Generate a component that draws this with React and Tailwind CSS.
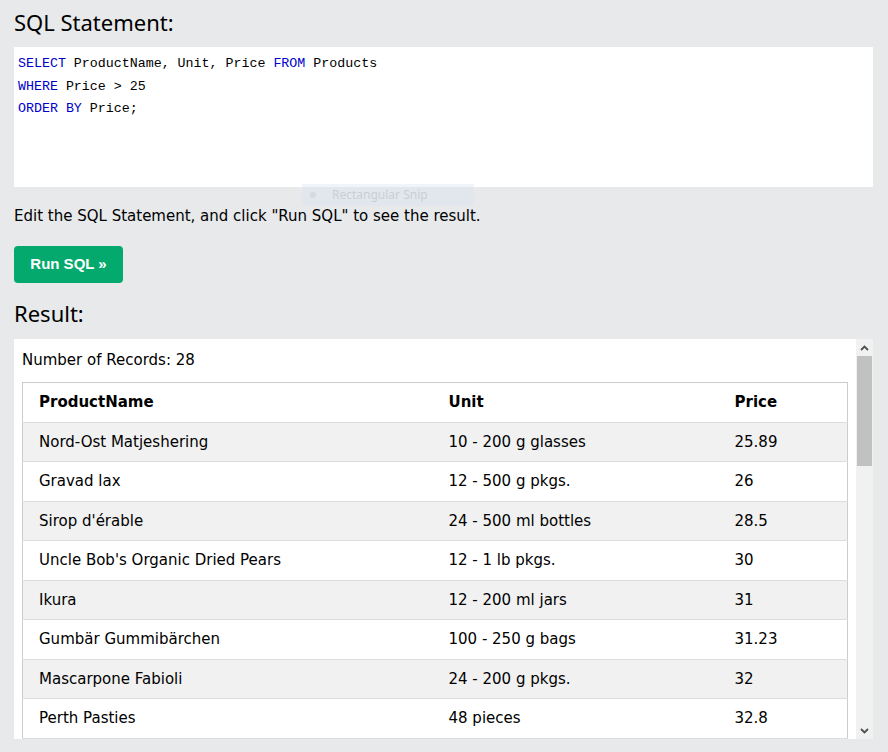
import React from "react";

const rows = [
  ["Nord-Ost Matjeshering", "10 - 200 g glasses", "25.89"],
  ["Gravad lax", "12 - 500 g pkgs.", "26"],
  ["Sirop d'érable", "24 - 500 ml bottles", "28.5"],
  ["Uncle Bob's Organic Dried Pears", "12 - 1 lb pkgs.", "30"],
  ["Ikura", "12 - 200 ml jars", "31"],
  ["Gumbär Gummibärchen", "100 - 250 g bags", "31.23"],
  ["Mascarpone Fabioli", "24 - 200 g pkgs.", "32"],
  ["Perth Pasties", "48 pieces", "32.8"],
];

const heading = { fontFamily: '"Noto Sans", "Open Sans", sans-serif' };
const verdana = { fontFamily: '"DejaVu Sans", Verdana, sans-serif' };

export default function App() {
  return (
    <div className="relative h-[752px] overflow-hidden bg-[#e7e9eb] pl-[14px] pr-[15px] pt-[5px] text-black">
      <h2 className="text-[22px] leading-[34px] font-normal" style={heading}>
        SQL Statement:
      </h2>
      <div
        className="mt-[8px] h-[140px] bg-white pl-[4px] pt-[6px] text-[13.3px] leading-[22.5px] text-black"
        style={{ fontFamily: '"Liberation Mono", monospace' }}
      >
        <div>
          <span className="text-[#0000cd]">SELECT</span> ProductName, Unit, Price{" "}
          <span className="text-[#0000cd]">FROM</span> Products
        </div>
        <div>
          <span className="text-[#0000cd]">WHERE</span> Price &gt; 25
        </div>
        <div>
          <span className="text-[#0000cd]">ORDER BY</span> Price;
        </div>
      </div>
      <p className="mt-[19px] text-[15px] leading-[20px]" style={verdana}>
        Edit the SQL Statement, and click "Run SQL" to see the result.
      </p>
      <button
        className="mt-[20px] flex h-[37px] w-[109px] items-center justify-center rounded-[4px] bg-[#04aa6d] text-[15px] font-bold text-white"
        style={{ fontFamily: '"Liberation Sans", Arial, sans-serif' }}
      >
        Run SQL »
      </button>
      <h2 className="mt-[13px] text-[22px] leading-[34px] font-normal" style={heading}>
        Result:
      </h2>
      <div className="mt-[9px] flex h-[400px] overflow-hidden bg-white">
        <div className="flex-1 overflow-hidden px-[8px] pt-[11px]" style={verdana}>
          <div className="text-[15px] leading-[20px]">Number of Records: 28</div>
          <table className="mt-[12px] w-full table-fixed border-collapse border border-[#cccccc] text-[15px] leading-[22.5px]">
            <colgroup>
              <col className="w-[418px]" />
              <col className="w-[286px]" />
              <col />
            </colgroup>
            <thead>
              <tr className="border-b border-[#dddddd] bg-white">
                <th className="py-[8px] pl-[16px] pr-[8px] text-left font-bold">ProductName</th>
                <th className="px-[8px] py-[8px] text-left font-bold">Unit</th>
                <th className="px-[8px] py-[8px] text-left font-bold">Price</th>
              </tr>
            </thead>
            <tbody>
              {rows.map((r, i) => (
                <tr
                  key={i}
                  className={`border-b border-[#dddddd] ${i % 2 === 0 ? "bg-[#f1f1f1]" : "bg-white"}`}
                >
                  <td className="py-[8px] pl-[16px] pr-[8px]">{r[0]}</td>
                  <td className="px-[8px] py-[8px]">{r[1]}</td>
                  <td className="px-[8px] py-[8px]">{r[2]}</td>
                </tr>
              ))}
            </tbody>
          </table>
        </div>
        <div className="flex w-[17px] flex-col bg-[#f1f1f1]">
          <div className="flex h-[17px] items-center justify-center">
            <svg width="9" height="6" viewBox="0 0 9 6">
              <path d="M1 5 L4.5 1.5 L8 5" fill="none" stroke="#505050" strokeWidth="1.8" />
            </svg>
          </div>
          <div className="mx-[1px] h-[110px] bg-[#c1c1c1]" />
          <div className="flex-1" />
          <div className="flex h-[17px] items-center justify-center">
            <svg width="9" height="6" viewBox="0 0 9 6">
              <path d="M1 1 L4.5 4.5 L8 1" fill="none" stroke="#505050" strokeWidth="1.8" />
            </svg>
          </div>
        </div>
      </div>
      <div
        className="absolute left-[302px] top-[184px] flex h-[22px] w-[172px] items-center gap-[16px] bg-[#dce5f3] pl-[8px] opacity-40"
        style={{ fontFamily: '"Noto Sans", sans-serif' }}
      >
        <div className="h-[6px] w-[6px] rounded-full bg-[#b8c4d6]" />
        <span className="text-[12px] text-[#9aa5b8]">Rectangular Snip</span>
      </div>
    </div>
  );
}
